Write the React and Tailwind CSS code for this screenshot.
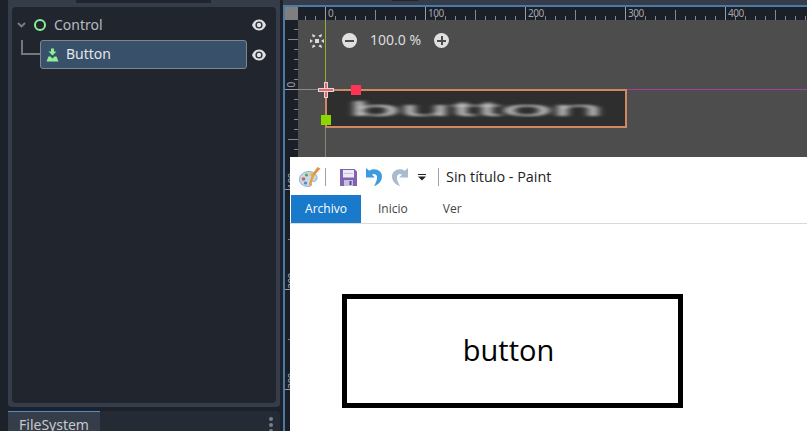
const font = { fontFamily: '"Noto Sans", sans-serif' };

function Eye() {
  return (
    <svg width="16" height="16" viewBox="0 0 16 16">
      <path d="M1 8C2.500 4.300 5 2.500 8 2.500S13.500 4.300 15 8C13.500 11.700 11 13.500 8 13.500S2.500 11.700 1 8Z" fill="#e0e1e3" />
      <circle cx="8" cy="8" r="3.600" fill="#2b303a" />
      <circle cx="8" cy="8" r="2.200" fill="#e0e1e3" />
    </svg>
  );
}

function TopRuler() {
  const xs = [];
  for (let v = -20; v <= 480; v += 10) xs.push(v);
  return (
    <svg className="absolute left-0 top-0" width="509" height="13" viewBox="0 0 509 13">
      {xs.map((v) => {
        const x = v + 27.5;
        const big = v % 100 === 0;
        const mid = v % 50 === 0;
        const h = big ? 13 : mid ? 10 : 4;
        return <line key={v} x1={x} x2={x} y1={13 - h} y2="13" stroke={big ? '#9a9da3' : '#858990'} strokeWidth="1" />;
      })}
    </svg>
  );
}

function LeftRuler() {
  const ys = [];
  for (let v = -60; v <= 340; v += 10) ys.push(v);
  return (
    <svg className="absolute left-0 top-0" width="13" height="411" viewBox="0 0 13 411">
      {ys.map((v) => {
        const y = v + 69.5;
        const big = v % 100 === 0;
        const mid = v % 50 === 0;
        const w = big ? 13 : mid ? 10 : 4;
        return <line key={v} y1={y} y2={y} x1={13 - w} x2="13" stroke={big ? '#9a9da3' : '#858990'} strokeWidth="1" />;
      })}
    </svg>
  );
}

function Palette() {
  return (
    <svg width="22" height="22" viewBox="0 0 22 22">
      <path d="M0.500 13.500C0.500 8.500 5 5.500 10 5.500C15 5.500 18.500 9 18 13C17.500 15 15 15.500 13.500 15.500C12 15.500 12 17 12.500 18C13 19.500 11.500 20.500 9.500 20.500C4.500 20.500 0.500 18 0.500 13.500Z" fill="#c5d9ea" stroke="#8fb0cb" strokeWidth="1" />
      <circle cx="4.500" cy="13" r="1.800" fill="#d9604a" />
      <circle cx="7.500" cy="9" r="1.600" fill="#5da653" />
      <circle cx="12" cy="8.500" r="1.500" fill="#e8bd4a" />
      <circle cx="6.500" cy="17" r="1.600" fill="#4e86c8" />
      <path d="M18.500 1L21.500 2.500L15 10L13 8.500Z" fill="#d89a4a" />
      <path d="M13 8.500L15 10L12 18.500L10 20L10.200 17Z" fill="#eda02f" />
    </svg>
  );
}

function Save() {
  return (
    <svg width="17" height="17" viewBox="0 0 17 17">
      <path d="M0 0H14.500L17 2.500V17H0Z" fill="#7f63ae" />
      <rect x="3" y="1" width="11" height="7.500" fill="#eeeaf6" />
      <rect x="4" y="4" width="9" height="1" fill="#c9bfe0" />
      <rect x="4" y="11" width="9" height="6" fill="#c9bfe0" />
      <rect x="9.500" y="12" width="2" height="4" fill="#5f4790" />
    </svg>
  );
}

function Arrow({ color, flip }) {
  return (
    <svg width="18" height="20" viewBox="0 0 18 20" style={{ transform: flip ? 'scaleX(-1)' : undefined }}>
      <path d="M1 1V10.500H10L7 7.800C9 6.300 11.500 7.200 12 9.500C12.500 12 11 15.500 9 19C14 17.800 17 13.500 17 9.200C17 3.500 10 0 4.300 3.700Z" fill={color} />
    </svg>
  );
}

export default function App() {
  return (
    <div className="relative flex h-[431px] w-[807px] overflow-hidden bg-[#1d2129] text-[14px]" style={font}>
      <aside className="flex h-full w-[283px] flex-col gap-1 pl-2 pr-[3px]">
        <div className="relative h-[407px] shrink-0 rounded-b bg-[#363d4a] px-1 pb-1 pt-[7px]">
          <div className="absolute left-[68px] top-0 h-[3px] w-[135px] bg-[#20252e]" />
          <div className="h-full rounded bg-[#20252e] px-[4px] pt-2">
            <div className="flex h-5 items-center">
              <svg className="ml-[1px] w-[9px]" height="6" viewBox="0 0 9 6">
                <path d="M1 1L4.500 4.500L8 1" fill="none" stroke="#7b7f86" strokeWidth="1.800" />
              </svg>
              <span className="ml-[8px] h-3 w-3 rounded-full border-2 border-[#8eef97]" />
              <span className="ml-[8px] text-[14px] leading-5 text-[#b8bbc0]">Control</span>
              <span className="ml-auto mr-[5px] flex"><Eye /></span>
            </div>
            <div className="relative mt-[5px] flex h-[29px] items-center">
              <div className="absolute left-[5px] top-0 h-[15px] w-[19px] border-b-2 border-l-2 border-[#74777d]" />
              <div className="ml-6 flex h-[29px] w-[207px] items-center rounded-[3px] border border-[#7d8590] bg-[#385069] pl-[5px]">
                <svg width="13" height="14" viewBox="0 0 13 14">
                  <path d="M5 0.500H8V3.500H10.500L6.500 7.500L2.500 3.500H5Z" fill="#8eef97" />
                  <path d="M2.500 8.500H4.500L6.500 10.500L8.500 8.500H10.500L12.500 13.500H0.500Z" fill="#8eef97" />
                </svg>
                <span className="ml-[7px] pb-[2px] text-[14px] leading-5 text-[#e3e6ea]">Button</span>
              </div>
              <span className="ml-auto mr-[5px] flex"><Eye /></span>
            </div>
          </div>
        </div>
        <div className="relative flex-1 rounded-t bg-[#252b34]">
          <div className="h-full w-[92px] border-t border-[#4f8fc9] bg-[#363d4a] pl-[11px] pt-[3px] text-[14px] leading-5 text-[#c7c9cd]">FileSystem</div>
          <div className="absolute left-[261px] top-[6px] flex flex-col gap-[2px]">
            <span className="h-1 w-1 rounded-full bg-[#7a7e85]" />
            <span className="h-1 w-1 rounded-full bg-[#7a7e85]" />
            <span className="h-1 w-1 rounded-full bg-[#7a7e85]" />
          </div>
        </div>
      </aside>

      <main className="flex h-full min-w-0 flex-1 flex-col">
        <div className="relative h-[5px] shrink-0 bg-[#363d4a]">
          <div className="absolute left-[109px] top-0 h-px w-[26px] bg-[#20252e]" />
        </div>
        <div className="flex min-h-0 flex-1 flex-col border-l-2 border-t-2 border-[#4d7aa3]">
          <div className="flex h-[13px] shrink-0">
            <div className="w-[13px] shrink-0 bg-[#7f7f7f]" />
            <div className="relative flex-1 overflow-hidden bg-[#1b1f28] text-[10px] leading-[13px] tracking-[-0.5px] text-[#a3a6ab]">
              <TopRuler />
              <span className="absolute left-[30px] top-0">0</span>
              <span className="absolute left-[130px] top-0">100</span>
              <span className="absolute left-[230px] top-0">200</span>
              <span className="absolute left-[330px] top-0">300</span>
              <span className="absolute left-[430px] top-0">400</span>
            </div>
          </div>
          <div className="flex min-h-0 flex-1">
            <div className="relative w-[13px] shrink-0 overflow-hidden bg-[#1b1f28] text-[10px] leading-[10px] tracking-[-0.5px] text-[#a3a6ab]">
              <LeftRuler />
              <span className="absolute left-[3px] top-[60px] -rotate-90">0</span>
              <span className="absolute left-[-1px] top-[156px] -rotate-90">100</span>
              <span className="absolute left-[-1px] top-[256px] -rotate-90">200</span>
              <span className="absolute left-[-1px] top-[356px] -rotate-90">300</span>
            </div>
            <div className="relative min-w-0 flex-1 overflow-hidden bg-[#4d4d4d]">
              <div className="absolute left-[27px] top-0 h-[69px] w-px bg-[#8fb12c]" />
              <div className="absolute left-[27px] top-[69px] h-[70px] w-px bg-[#7b8c6f]" />
              <div className="absolute left-0 top-[69px] h-px w-[27px] bg-[#8a8a8a]" />
              <div className="absolute left-[27px] top-[69px] h-px w-[302px] bg-[#e04560]" />
              <div className="absolute left-[329px] top-[69px] h-px w-[180px] bg-[#a3409c]" />

              <div className="absolute left-[11px] top-[10px] flex items-center">
                <svg width="16" height="16" viewBox="0 0 16 16" fill="#dcdcdc">
                  <path d="M3 1L6.500 2.500L5 4.500L3.500 3.500ZM13 1L9.500 2.500L11 4.500L12.500 3.500ZM3 15L6.500 13.500L5 11.500L3.500 12.500ZM13 15L9.500 13.500L11 11.500L12.500 12.500Z" />
                  <path d="M1 6L4 8L1 10ZM15 6L12 8L15 10Z" />
                  <rect x="6" y="6" width="4" height="4" />
                </svg>
                <span className="ml-[17px] flex h-[15px] w-[15px] items-center justify-center rounded-full bg-[#e0e0e0]">
                  <span className="h-[2px] w-[9px] bg-[#4d4d4d]" />
                </span>
                <span className="ml-[13px] w-[52px] pb-[1px] text-[14px] leading-5 text-[#dcdcdc]">100.0 %</span>
                <span className="relative ml-[12px] flex h-[15px] w-[15px] items-center justify-center rounded-full bg-[#e0e0e0]">
                  <span className="h-[2px] w-[9px] bg-[#4d4d4d]" />
                  <span className="absolute h-[9px] w-[2px] bg-[#4d4d4d]" />
                </span>
              </div>

              <div className="absolute left-[27px] top-[69px] flex h-[39px] w-[302px] items-center justify-center overflow-hidden border-2 border-[#d08862] bg-[#2e2e2e]">
                <span className="origin-center scale-x-[4.35] text-[21px] leading-5 text-[#d8d8d8] blur-[1px]" style={{ fontFamily: '"Liberation Sans", sans-serif' }}>button</span>
              </div>

              <div className="absolute left-[20px] top-[62px] h-4 w-4">
                <div className="absolute left-[6px] top-0 h-4 w-1 border border-[#d9d9d9] bg-[#e9636f]" />
                <div className="absolute left-0 top-[6px] h-1 w-4 border border-[#d9d9d9] bg-[#e9636f]" />
              </div>
              <div className="absolute left-[53px] top-[65px] h-[10px] w-[10px] bg-[#ff3355]" />
              <div className="absolute left-[23px] top-[95px] h-[10px] w-[10px] bg-[#8bd700]" />
            </div>
          </div>
        </div>
      </main>

      <section className="absolute left-[290px] top-[157px] h-[274px] w-[517px] bg-white text-[#222]" style={{ fontFamily: '"Open Sans", "Noto Sans", sans-serif' }}>
        <div className="flex h-[38px] items-center pl-[9px] pt-[2px]">
          <Palette />
          <span className="ml-[4px] h-[18px] w-px bg-[#a0a0a0]" />
          <span className="ml-[14px] flex"><Save /></span>
          <span className="ml-[8px] flex"><Arrow color="#3d9be0" /></span>
          <span className="ml-[8px] flex"><Arrow color="#a9bccf" flip /></span>
          <svg className="ml-[9px]" width="8" height="8" viewBox="0 0 8 8">
            <path d="M0 1H8V2H0ZM0 3.500H8L4 7.500Z" fill="#222" />
          </svg>
          <span className="ml-[12px] h-[18px] w-px bg-[#a0a0a0]" />
          <span className="ml-[7px] text-[14.400px] leading-5">Sin título - Paint</span>
        </div>
        <div className="flex h-[29px] border-b border-[#d9d9d9] text-[12px]">
          <div className="ml-px flex w-[70px] items-center justify-center bg-[#1979ca] text-white">Archivo</div>
          <div className="ml-[17px] flex items-center text-[#444]">Inicio</div>
          <div className="ml-[35px] flex items-center text-[#444]">Ver</div>
        </div>
        <div className="pl-[52px] pt-[70px]">
          <div className="flex h-[114px] w-[341px] items-center justify-center border-[5px] border-black pb-[3px] pr-[8px] text-[29px] text-black">button</div>
        </div>
      </section>
    </div>
  );
}
